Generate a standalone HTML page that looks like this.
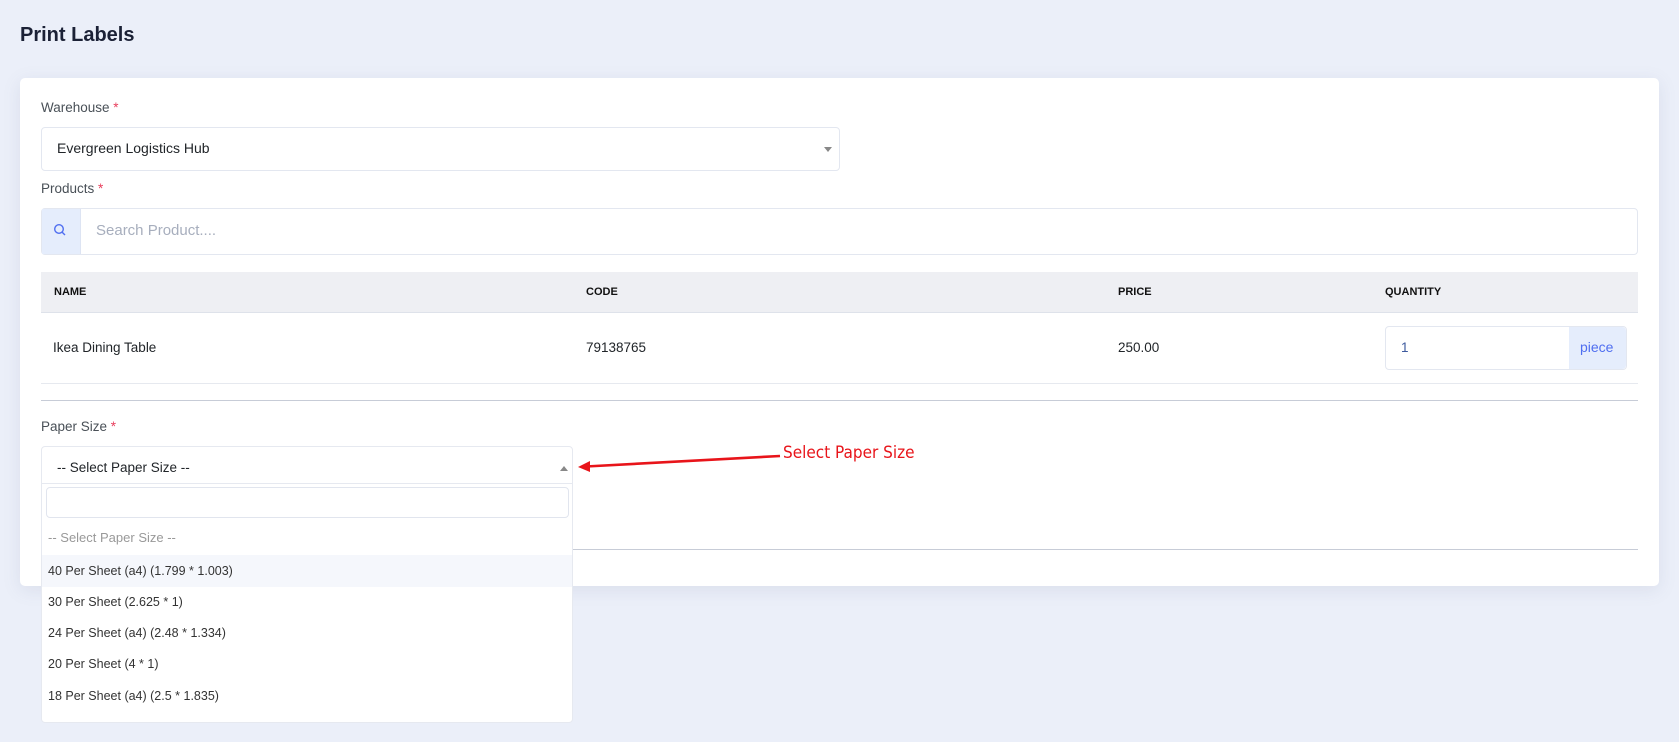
<!DOCTYPE html>
<html><head><style>
*{box-sizing:border-box;margin:0;padding:0}
body{width:1679px;height:742px;background:#ebeff9;font-family:"Liberation Sans",sans-serif;color:#212529;position:relative;overflow:hidden;font-size:13.5px}
.abs{position:absolute}
h1{position:absolute;left:20px;top:24px;font-size:20px;font-weight:bold;color:#1b2136}
.card{position:absolute;left:20px;top:78px;width:1639px;height:508px;background:#fff;border-radius:5px;box-shadow:0 4px 18px rgba(100,110,140,.12)}
.lbl{position:absolute;left:41px;color:#495057;font-size:13.5px}
.lbl b{color:#e83e5c;font-weight:normal}
.box{position:absolute;border:1px solid #e3e7f0;border-radius:4px;background:#fff}
</style></head><body>
<h1>Print Labels</h1>
<div class="card"></div>
<div class="lbl" style="top:100px">Warehouse <b>*</b></div>
<div class="box" style="left:41px;top:127px;width:799px;height:44px"></div>
<div class="abs" style="left:57px;top:140px;font-size:14px;color:#212529">Evergreen Logistics Hub</div>
<div class="abs" style="left:824px;top:147px;width:0;height:0;border-left:4px solid transparent;border-right:4px solid transparent;border-top:5px solid #888"></div>
<div class="lbl" style="top:181px">Products <b>*</b></div>
<div class="box" style="left:41px;top:208px;width:1597px;height:47px"></div>
<div class="abs" style="left:42px;top:209px;width:39px;height:45px;background:#e5edfc;border-right:1px solid #dde4f3"></div>
<svg class="abs" style="left:53px;top:223px" width="14" height="14" viewBox="0 0 14 14"><circle cx="6" cy="6" r="4.3" fill="none" stroke="#4f6ef0" stroke-width="1.4"/><line x1="9.2" y1="9.2" x2="12" y2="12" stroke="#4f6ef0" stroke-width="1.4"/></svg>
<div class="abs" style="left:96px;top:222px;font-size:15px;color:#a7aebd">Search Product....</div>
<div class="abs" style="left:41px;top:272px;width:1597px;height:41px;background:#eeeff3;border-bottom:1px solid #dee2ea"></div>
<div class="abs" style="top:286px;left:54px;font-size:11px;font-weight:bold;color:#111">NAME</div>
<div class="abs" style="top:286px;left:586px;font-size:11px;font-weight:bold;color:#111">CODE</div>
<div class="abs" style="top:286px;left:1118px;font-size:11px;font-weight:bold;color:#111">PRICE</div>
<div class="abs" style="top:286px;left:1385px;font-size:11px;font-weight:bold;color:#111">QUANTITY</div>
<div class="abs" style="top:340px;left:53px;font-size:13.5px">Ikea Dining Table</div>
<div class="abs" style="top:340px;left:586px;font-size:13.5px">79138765</div>
<div class="abs" style="top:340px;left:1118px;font-size:13.5px">250.00</div>
<div class="box" style="left:1385px;top:326px;width:242px;height:44px"></div>
<div class="abs" style="left:1569px;top:327px;width:57px;height:42px;background:#e5edfc;border-radius:0 4px 4px 0"></div>
<div class="abs" style="left:1401px;top:340px;color:#3d5a9e;font-size:13.5px">1</div>
<div class="abs" style="left:1580px;top:339px;color:#4f6ef0;font-size:14px">piece</div>
<div class="abs" style="left:41px;top:383px;width:1597px;height:1px;background:#e6e9ef"></div>
<div class="abs" style="left:41px;top:400px;width:1597px;height:1px;background:#c7ccd7"></div>
<div class="abs" style="left:41px;top:549px;width:1597px;height:1px;background:#c7ccd7"></div>
<div class="lbl" style="top:419px">Paper Size <b>*</b></div>
<div class="box" style="left:41px;top:446px;width:532px;height:277px;border-color:#e6e9f0"></div>
<div class="abs" style="left:42px;top:483px;width:530px;height:1px;background:#e6e9f0"></div>
<div class="abs" style="left:57px;top:460px;font-size:13.5px">-- Select Paper Size --</div>
<div class="abs" style="left:560px;top:466px;width:0;height:0;border-left:4px solid transparent;border-right:4px solid transparent;border-bottom:5px solid #888"></div>
<div class="box" style="left:46px;top:487px;width:523px;height:31px;border-color:#e1e5ee"></div>
<div class="abs" style="left:48px;top:530px;color:#999;font-size:13px">-- Select Paper Size --</div>
<div class="abs" style="left:42px;top:555px;width:530px;height:32px;background:#f5f7fc"></div>
<div class="abs" style="left:48px;top:564px;font-size:12.5px;color:#333">40 Per Sheet (a4) (1.799 * 1.003)</div>
<div class="abs" style="left:48px;top:595px;font-size:12.5px;color:#333">30 Per Sheet (2.625 * 1)</div>
<div class="abs" style="left:48px;top:626px;font-size:12.5px;color:#333">24 Per Sheet (a4) (2.48 * 1.334)</div>
<div class="abs" style="left:48px;top:657px;font-size:12.5px;color:#333">20 Per Sheet (4 * 1)</div>
<div class="abs" style="left:48px;top:689px;font-size:12.5px;color:#333">18 Per Sheet (a4) (2.5 * 1.835)</div>
<svg class="abs" style="left:570px;top:448px" width="220" height="30"><line x1="16" y1="18.5" x2="210" y2="8" stroke="#e8141a" stroke-width="2.6"/><polygon points="8,19 20,13 20,24" fill="#e8141a"/></svg>
<div class="abs" style="left:783px;top:443px;color:#e8141a;font-size:17px;font-family:'DejaVu Sans Condensed','Liberation Sans Narrow',sans-serif">Select Paper Size</div>
</body></html>
